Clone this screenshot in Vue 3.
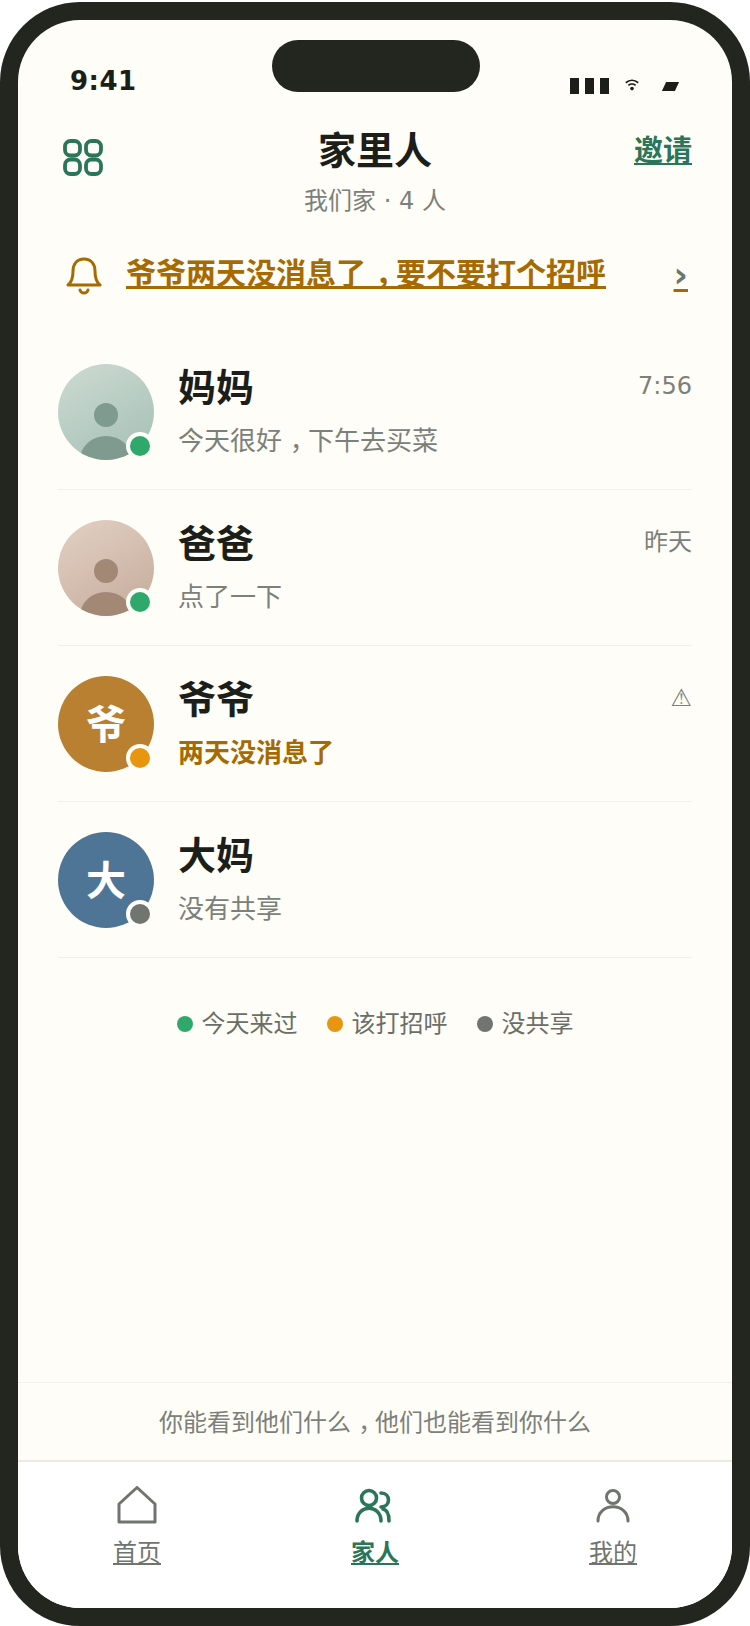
<script setup>
const members = [
  { name: '妈妈', note: ['今天很好', '下午去买菜'], time: '7:56', status: 'ok', photo: 'mom' },
  { name: '爸爸', note: ['点了一下'], time: '昨天', status: 'ok', photo: 'dad' },
  { name: '爷爷', note: ['两天没消息了'], time: '⚠', status: 'warn', letter: '爷', tone: 'brown' },
  { name: '大妈', note: ['没有共享'], time: '', status: 'off', letter: '大', tone: 'blue' }
]

const legend = [
  { label: '今天来过', status: 'ok' },
  { label: '该打招呼', status: 'warn' },
  { label: '没共享', status: 'off' }
]
</script>

<template>
  <div class="phone">
    <div class="screen">
      <div class="island"></div>

      <div class="status-bar">
        <span class="clock">9:41</span>
        <div class="status-icons">
          <span class="bars"><i></i><i></i><i></i></span>
          <svg class="wifi" width="14" height="12" viewBox="0 0 14 12" fill="none" stroke="#1c1e1a" stroke-width="1.8">
            <path d="M.8 3.800 C4.500 .6 9.500 .6 13.200 3.800" />
            <path d="M3.400 6.400 C5.400 4.700 8.600 4.700 10.600 6.400" />
            <circle cx="7" cy="9.600" r="1.800" fill="#1c1e1a" stroke="none" />
          </svg>
          <span class="battery"></span>
        </div>
      </div>

      <header class="top">
        <button class="grid-btn" aria-label="菜单">
          <svg width="40" height="37" viewBox="0 0 40 37" fill="none" stroke="#2b7559" stroke-width="3.800">
            <rect x="2" y="2" width="15" height="14.500" rx="5.500" />
            <rect x="23" y="2" width="15" height="14.500" rx="5.500" />
            <rect x="2" y="20.500" width="15" height="14.500" rx="5.500" />
            <rect x="23" y="20.500" width="15" height="14.500" rx="5.500" />
          </svg>
        </button>
        <div class="heading">
          <h1>家里人</h1>
          <p>我们家 · 4 人</p>
        </div>
        <a class="invite" href="#">邀请</a>
      </header>

      <div class="alert">
        <svg class="bell" width="36" height="40" viewBox="0 0 36 40" fill="none" stroke="#a66a00" stroke-width="3" stroke-linecap="round" stroke-linejoin="round">
          <path d="M2 29 C6 26 7 22 7 15 C7 8 11 3 18 3 C25 3 29 8 29 15 C29 22 30 26 34 29 Z" />
          <path d="M14 34 C15 38 21 38 22 34" />
        </svg>
        <a class="alert-text" href="#">爷爷两天没消息<span class="before-comma">了</span><span class="comma-tight">，</span>要不要打个招呼</a>
        <a class="alert-go" href="#"><span>›</span></a>
      </div>

      <ul class="list">
        <li v-for="m in members" :key="m.name" class="row">
          <div class="avatar" :class="m.photo || m.tone">
            <svg v-if="m.photo" width="96" height="96" viewBox="0 0 96 96" class="person">
              <circle cx="48" cy="51" r="12" />
              <ellipse cx="48" cy="96" rx="26" ry="24" />
            </svg>
            <span v-else class="letter">{{ m.letter }}</span>
            <i class="dot" :class="m.status"></i>
          </div>
          <div class="info">
            <div class="line">
              <strong>{{ m.name }}</strong>
              <span class="time">{{ m.time }}</span>
            </div>
            <p class="note" :class="{ warn: m.status === 'warn' }">
              {{ m.note[0] }}<template v-if="m.note[1]"><span class="comma">，</span>{{ m.note[1] }}</template>
            </p>
          </div>
        </li>
      </ul>

      <div class="legend">
        <span v-for="l in legend" :key="l.label" class="legend-item">
          <i class="legend-dot" :class="l.status"></i>{{ l.label }}
        </span>
      </div>

      <div class="spacer"></div>

      <p class="footnote">你能看到他们什么<span class="comma">，</span>他们也能看到你什么</p>

      <nav class="tabs">
        <a class="tab" href="#">
          <svg width="40" height="38" viewBox="0 0 40 38" fill="none" stroke="#6f746e" stroke-width="3" stroke-linejoin="round">
            <path d="M2 18 L20 1.500 L38 18 V36 H2 Z" />
          </svg>
          <span>首页</span>
        </a>
        <a class="tab active" href="#">
          <svg width="40" height="38" viewBox="0 0 40 38" fill="none" stroke="#2b7559" stroke-width="3.600" stroke-linecap="round">
            <circle cx="14" cy="12" r="7.500" />
            <path d="M2 35 C2 18 26 18 26 35" />
            <path d="M26 7 C36 7 36 21 26 21" />
            <path d="M28 23 C33 24 34 30 34 35" />
          </svg>
          <span>家人</span>
        </a>
        <a class="tab" href="#">
          <svg width="40" height="38" viewBox="0 0 40 38" fill="none" stroke="#6f746e" stroke-width="3" stroke-linecap="round">
            <circle cx="20" cy="11" r="6.500" />
            <path d="M5 35 C5 16 35 16 35 35" />
          </svg>
          <span>我的</span>
        </a>
      </nav>
    </div>
  </div>
</template>

<style scoped>
.phone {
  width: 750px;
  height: 1624px;
  margin-top: 2px;
  box-sizing: border-box;
  padding: 18px 18px 18px;
  background: #23251f;
  border-radius: 80px;
  display: flex;
  font-family: "DejaVu Sans", "Noto Sans CJK SC", sans-serif;
}

/* the reference sets its full-width comma in the middle of the cell */
.comma {
  padding-left: .3em;
  letter-spacing: -.3em;
}

/* same shift, but padding would break the underline of the alert link */
.before-comma {
  letter-spacing: .3em;
}

.comma-tight {
  letter-spacing: -.3em;
}

.screen {
  flex: 1;
  position: relative;
  background: #fefdf7;
  border-radius: 62px;
  overflow: hidden;
  display: flex;
  flex-direction: column;
}

.island {
  position: absolute;
  top: 20px;
  left: 254px;
  width: 208px;
  height: 52px;
  border-radius: 26px;
  background: #23251f;
}

.status-bar {
  height: 94px;
  box-sizing: border-box;
  padding: 46px 0 0 52px;
  display: flex;
  justify-content: space-between;
  align-items: flex-start;
  color: #1c1e1a;
}

.clock {
  font-size: 26px;
  font-weight: 700;
  line-height: 30px;
  letter-spacing: .5px;
}

.status-icons {
  display: flex;
  align-items: flex-start;
  padding: 58px 55px 0 0;
  margin-top: -46px;
}

.bars {
  display: flex;
  gap: 6px;
}

.bars i {
  width: 9px;
  height: 16px;
  background: #1c1e1a;
}

.wifi {
  margin: 1px 0 0 16px;
}

.battery {
  width: 13px;
  height: 9px;
  margin: 4px 0 0 25px;
  background: #1c1e1a;
  transform: skewX(-25deg);
}

.top {
  display: flex;
  align-items: flex-start;
  justify-content: space-between;
  padding: 0 40px 0 45px;
  height: 116px;
}

.grid-btn {
  border: 0;
  padding: 0;
  margin-top: 25px;
  background: none;
  display: block;
}

.grid-btn svg {
  display: block;
}

.heading {
  text-align: center;
  position: absolute;
  left: 0;
  right: 0;
  top: 106px;
  pointer-events: none;
}

h1 {
  margin: 0;
  font-size: 38px;
  line-height: 50px;
  font-weight: 700;
  color: #1c1e1a;
}

.heading p {
  margin: 9px 0 0;
  font-size: 24px;
  line-height: 32px;
  color: #7c807a;
}

.invite {
  margin-top: 17px;
  font-size: 29px;
  line-height: 40px;
  font-weight: 700;
  color: #2b7559;
}

.alert {
  display: flex;
  align-items: center;
  padding: 0 44px 0 48px;
  height: 72px;
  margin-top: 10px;
}

.bell {
  flex: none;
  margin-right: 24px;
}

.alert-text {
  flex: 1;
  margin-bottom: 4px;
  font-size: 30px;
  line-height: 40px;
  font-weight: 700;
  color: #a66a00;
}

.alert-go {
  font-size: 35px;
  line-height: 40px;
  color: #a66a00;
  margin-top: -2px;
}

.alert-go span {
  color: #6f746e;
  font-weight: 700;
}

.list {
  list-style: none;
  margin: 0;
  padding: 22px 40px 0;
}

.row {
  display: flex;
  align-items: flex-start;
  height: 156px;
  box-sizing: border-box;
  padding-top: 30px;
  border-bottom: 1px solid #f1f0ea;
}

.avatar {
  position: relative;
  flex: none;
  width: 96px;
  height: 96px;
  border-radius: 50%;
  display: flex;
  align-items: center;
  justify-content: center;
  color: #fff;
  font-size: 40px;
  font-weight: 700;
}

.letter {
  margin-top: -4px;
}

.person {
  position: absolute;
  inset: 0;
  border-radius: 50%;
}

.mom {
  background: linear-gradient(150deg, #cddbd2, #a4bfb4);
}

.mom .person {
  fill: #7f9a8e;
}

.dad {
  background: linear-gradient(150deg, #e3d1c4, #c4aa9a);
}

.dad .person {
  fill: #a28875;
}

.brown {
  background: #b88030;
}

.blue {
  background: #4e7596;
}

.dot {
  position: absolute;
  right: 0;
  bottom: 0;
  width: 20px;
  height: 20px;
  border: 4px solid #fefdf7;
  border-radius: 50%;
}

.ok {
  background: #2fa96b;
}

.warn {
  background: #e8960f;
}

.off {
  background: #70766f;
}

.info {
  flex: 1;
  margin-left: 24px;
}

.line {
  display: flex;
  justify-content: space-between;
  align-items: flex-start;
}

strong {
  font-size: 38px;
  line-height: 48px;
  font-weight: 700;
  color: #1c1e1a;
}

.time {
  margin-top: 6px;
  font-size: 24px;
  line-height: 32px;
  color: #7c807a;
}

.note {
  margin: 11px 0 0;
  font-size: 26px;
  line-height: 36px;
  color: #7c807a;
}

.note.warn {
  background: none;
  color: #a66a00;
  font-weight: 700;
}

.legend {
  display: flex;
  justify-content: center;
  gap: 29px;
  margin-top: 49px;
  font-size: 24px;
  line-height: 34px;
  color: #6a6e68;
}

.legend-item {
  display: flex;
  align-items: center;
}

.legend-dot {
  width: 16px;
  height: 16px;
  border-radius: 50%;
  margin-right: 9px;
}

.spacer {
  flex: 1;
}

.footnote {
  margin: 0;
  height: 77px;
  border-top: 1px solid #f1f0ea;
  text-align: center;
  font-size: 24px;
  line-height: 80px;
  color: #7c807a;
}

.tabs {
  height: 148px;
  box-sizing: border-box;
  border-top: 2px solid #eceae2;
  background: #fff;
  display: flex;
  justify-content: space-around;
  padding-top: 24px;
}

.tab {
  width: 200px;
  display: flex;
  flex-direction: column;
  align-items: center;
  gap: 12px;
  font-size: 24px;
  line-height: 34px;
  color: #6f746e;
}

.active {
  color: #2b7559;
  font-weight: 700;
}
</style>

<style>
html, body {
  margin: 0;
  background: #fff;
}
</style>
